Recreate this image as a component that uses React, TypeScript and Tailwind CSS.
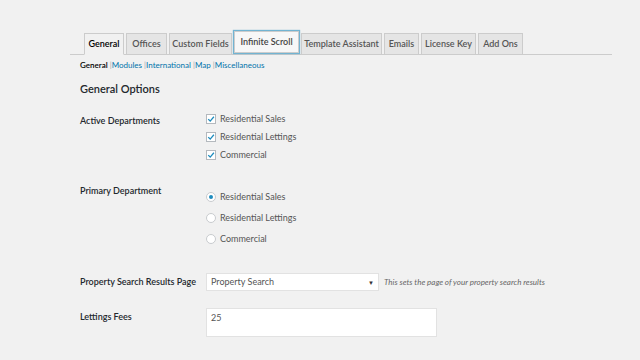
import React from "react";

const tabs = [
  { label: "General", w: 40, active: true },
  { label: "Offices", w: 41 },
  { label: "Custom Fields", w: 63 },
  { label: "Infinite Scroll", w: 65, focus: true },
  { label: "Template Assistant", w: 81 },
  { label: "Emails", w: 35 },
  { label: "License Key", w: 55 },
  { label: "Add Ons", w: 45 },
];

function Check() {
  return (
    <span className="w-[10px] h-[10px] border border-[#b4b9be] bg-white flex items-center justify-center shrink-0">
      <svg width="8" height="8" viewBox="0 0 10 10">
        <path d="M1.5 5.2 L4 7.6 L8.6 2.2" stroke="#1e8cbe" strokeWidth="1.6" fill="none" />
      </svg>
    </span>
  );
}

function Radio({ on }: { on?: boolean }) {
  return (
    <span className="w-[10px] h-[10px] rounded-full border border-[#c8cbce] bg-white flex items-center justify-center shrink-0">
      {on && <span className="w-[4px] h-[4px] rounded-full bg-[#1e8cbe]" />}
    </span>
  );
}

export default function App() {
  const links = ["Modules", "International", "Map", "Miscellaneous"];
  return (
    <div
      className="w-[640px] h-[360px] bg-[#f1f1f1] overflow-hidden text-[#23282d] text-[9px]"
      style={{ fontFamily: 'Lato, "Open Sans", sans-serif' }}
    >
      <div className="pt-[32px] ml-[70px] w-[542px] border-b border-[#cccccc] flex pl-[14px] gap-[2px] h-[55px] items-end">
        {tabs.map((t) => (
          <div
            key={t.label}
            style={{ width: t.w }}
            className={
              "h-[22px] flex items-center justify-center whitespace-nowrap border border-[#cccccc] mb-[-1px] font-semibold " +
              (t.active
                ? "bg-[#f1f1f1] border-b-[#f1f1f1] text-[#000000]"
                : t.focus
                ? "bg-[#f7f7f7] text-[#444444] border-[#5b9dd9] shadow-[0_0_1px_1px_rgba(30,140,190,0.6)] h-[19px] self-start mt-[-1px]"
                : "bg-[#e5e5e5] text-[#555555]")
            }
          >
            {t.label}
          </div>
        ))}
      </div>

      <div className="ml-[80px] mt-[4px] h-[12px] flex items-center text-[8px] text-[#555] whitespace-pre">
        <span className="text-black font-semibold">General</span>
        {links.map((l) => (
          <React.Fragment key={l}>
            <span className="text-[#aaa]"> |</span>
            <span className="text-[#0073aa]">{l}</span>
          </React.Fragment>
        ))}
      </div>

      <div className="ml-[80px] mt-[11px] h-[14px] flex items-center text-[11px] font-semibold text-[#23282d]">
        General Options
      </div>

      {/* Active Departments */}
      <div className="flex mt-[17px] ml-[80px]">
        <div className="w-[126px] font-semibold pt-[2px] leading-[12px]">Active Departments</div>
        <div className="flex flex-col gap-[6px] text-[#555]">
          {["Residential Sales", "Residential Lettings", "Commercial"].map((l) => (
            <div key={l} className="flex items-center gap-[4px] h-[12px]">
              <Check />
              <span>{l}</span>
            </div>
          ))}
        </div>
      </div>

      {/* Primary Department */}
      <div className="flex mt-[30px] ml-[80px]">
        <div className="w-[126px] font-semibold leading-[12px] mt-[-6px]">Primary Department</div>
        <div className="flex flex-col gap-[9px] text-[#555]">
          {["Residential Sales", "Residential Lettings", "Commercial"].map((l, i) => (
            <div key={l} className="flex items-center gap-[4px] h-[12px]">
              <Radio on={i === 0} />
              <span>{l}</span>
            </div>
          ))}
        </div>
      </div>

      {/* Property search */}
      <div className="flex mt-[28px] ml-[80px] items-center h-[18px]">
        <div className="w-[126px] font-semibold">Property Search Results Page</div>
        <div className="w-[173px] h-[18px] bg-white border border-[#e2e2e2] flex items-center justify-between px-[4px] text-[#555]">
          <span>Property Search</span>
          <span className="text-[6px] text-[#333]">▼</span>
        </div>
        <span className="ml-[5px] italic text-[#666] text-[8px]">This sets the page of your property search results</span>
      </div>

      {/* Lettings fees */}
      <div className="flex mt-[17px] ml-[80px]">
        <div className="w-[126px] font-semibold pt-[2px]">Lettings Fees</div>
        <div className="w-[231px] h-[29px] bg-white border border-[#e2e2e2] px-[4px] pt-[2px] text-[#555]">25</div>
      </div>
    </div>
  );
}
